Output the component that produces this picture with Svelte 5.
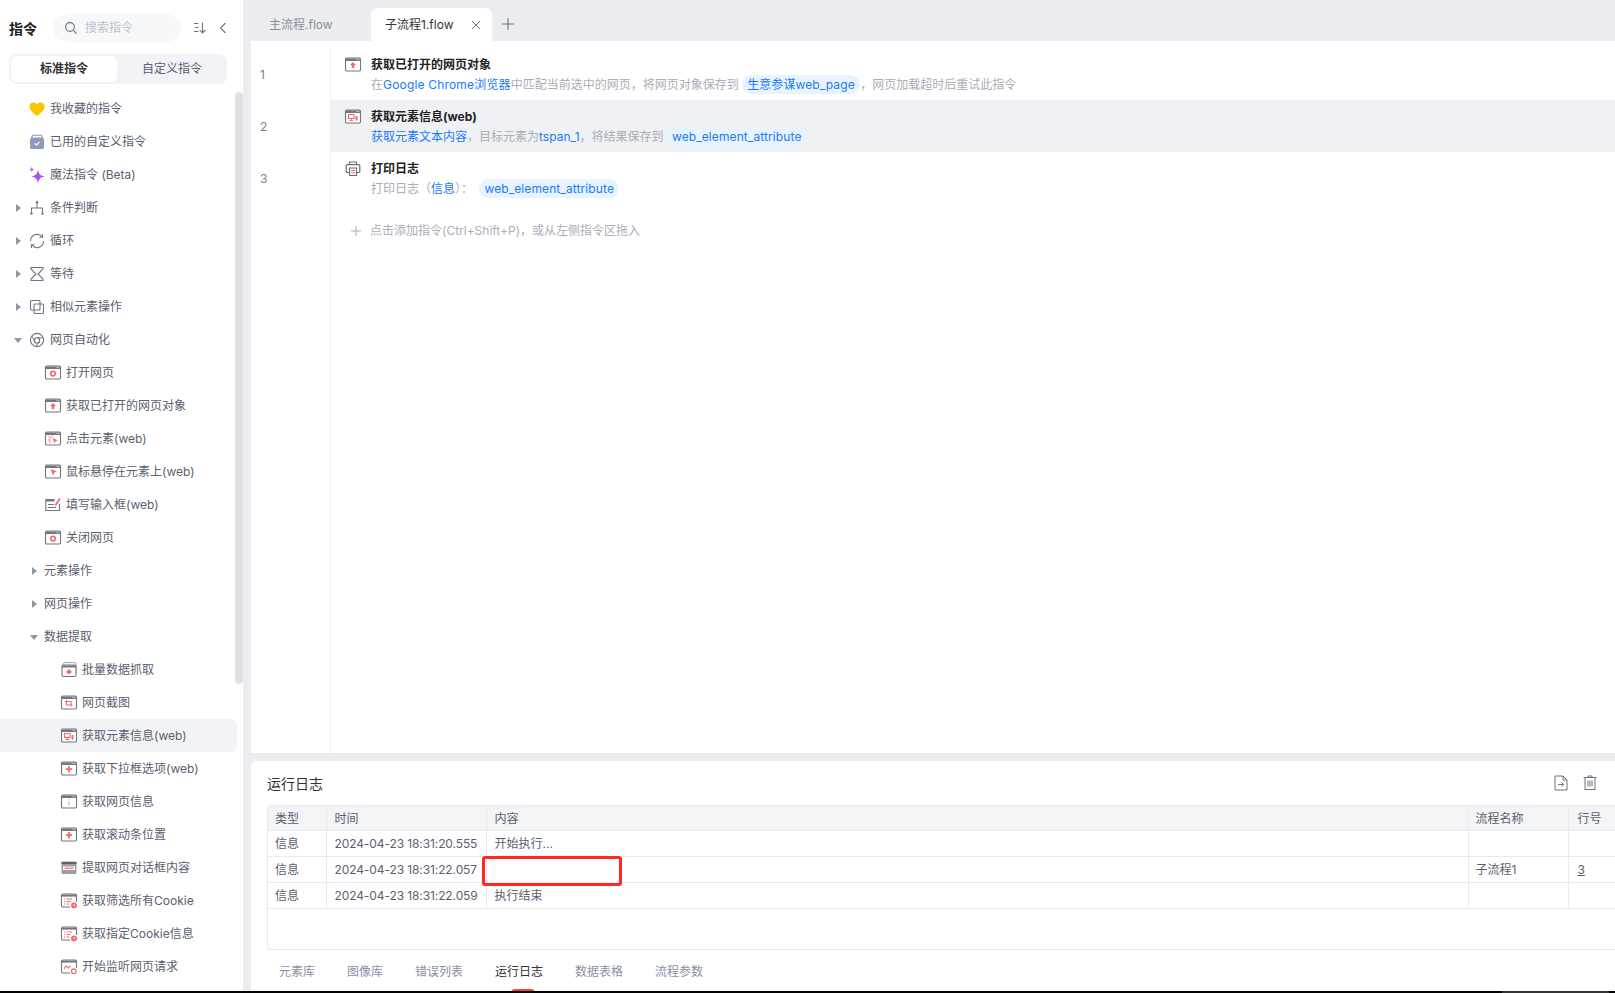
<script>
const tree = [
  { l: 0, t: '我收藏的指令', i: 'heart' },
  { l: 0, t: '已用的自定义指令', i: 'cal' },
  { l: 0, t: '魔法指令 (Beta)', i: 'spark' },
  { l: 0, t: '条件判断', i: 'branch', a: 'r' },
  { l: 0, t: '循环', i: 'loop', a: 'r' },
  { l: 0, t: '等待', i: 'hour', a: 'r' },
  { l: 0, t: '相似元素操作', i: 'copy', a: 'r' },
  { l: 0, t: '网页自动化', i: 'chrome', a: 'd' },
  { l: 1, t: '打开网页', i: 'ring' },
  { l: 1, t: '获取已打开的网页对象', i: 'up' },
  { l: 1, t: '点击元素(web)', i: 'click' },
  { l: 1, t: '鼠标悬停在元素上(web)', i: 'hover' },
  { l: 1, t: '填写输入框(web)', i: 'edit' },
  { l: 1, t: '关闭网页', i: 'ring' },
  { l: 'g', t: '元素操作', a: 'r' },
  { l: 'g', t: '网页操作', a: 'r' },
  { l: 'g', t: '数据提取', a: 'd' },
  { l: 2, t: '批量数据抓取', i: 'batch' },
  { l: 2, t: '网页截图', i: 'crop' },
  { l: 2, t: '获取元素信息(web)', i: 'info', on: true },
  { l: 2, t: '获取下拉框选项(web)', i: 'plus' },
  { l: 2, t: '获取网页信息', i: 'i' },
  { l: 2, t: '获取滚动条位置', i: 'plus' },
  { l: 2, t: '提取网页对话框内容', i: 'dialog' },
  { l: 2, t: '获取筛选所有Cookie', i: 'list' },
  { l: 2, t: '获取指定Cookie信息', i: 'list' },
  { l: 2, t: '开始监听网页请求', i: 'listen' }
];
const logs = [
  { time: '2024-04-23 18:31:20.555', text: '开始执行...', flow: '', line: '' },
  { time: '2024-04-23 18:31:22.057', text: '', flow: '子流程1', line: '3' },
  { time: '2024-04-23 18:31:22.059', text: '执行结束', flow: '', line: '' }
];
const bottomTabs = ['元素库', '图像库', '错误列表', '运行日志', '数据表格', '流程参数'];
</script>

{#snippet glyph(k)}
  {#if k === 'ring'}
    <circle cx="8" cy="8.6" r="2.3" fill="none" stroke="#f4686c" stroke-width="1.6" />
  {:else if k === 'up'}
    <path d="M8 5 L11 8 H9.3 V11 H6.7 V8 H5 Z" fill="#f4686c" />
  {:else if k === 'click'}
    <path d="M7.5 7 L13 9.2 L10.6 10 L9.6 12.4 Z" fill="#f4686c" /><path d="M3.5 5.5 L6 7.5 M3 9 H5.5 M4 12 L6 10 M7 4.5 V6.5" stroke="#f4686c" stroke-width="1" />
  {:else if k === 'hover'}
    <path d="M5.5 5 L12 7.6 L9.3 8.6 L8.2 11.5 Z" fill="#f4686c" />
  {:else if k === 'crop'}
    <path d="M5.5 5 V10 H11.5 M4 6.5 H10 V11.5" fill="none" stroke="#f4686c" stroke-width="1.1" />
  {:else if k === 'info'}
    <path d="M3.5 5.5 H9 V9.5 H3.5 Z M6.2 9.5 V11.5 M4.5 11.5 H8" fill="none" stroke="#f4686c" stroke-width="1.1" /><path d="M10.5 7 H12.5 V11.5 H10.5 Z" fill="#f4686c" />
  {:else if k === 'plus'}
    <path d="M8 5 V11.5 M4.8 8.2 H11.2" stroke="#f4686c" stroke-width="1.8" />
  {:else if k === 'i'}
    <path d="M8 5.2 V6.2 M8 7.4 V11.4" stroke="#f6a0a3" stroke-width="1.3" />
  {/if}
{/snippet}

{#snippet icon(k)}
  <svg class="ic" viewBox="0 0 16 16" aria-hidden="true">
    {#if k === 'heart'}
      <path d="M8 15 C2.6 11 .4 8.6 .4 5.6 C.4 3.2 2.2 1.6 4.3 1.6 C5.9 1.6 7.3 2.4 8 3.7 C8.7 2.4 10.1 1.6 11.7 1.6 C13.8 1.6 15.6 3.2 15.6 5.6 C15.6 8.6 13.4 11 8 15 Z" fill="#ffc400" />
    {:else if k === 'cal'}
      <path d="M3.5 1.2 H12.5 L13.5 4 H2.5 Z" fill="none" stroke="#8f9bb8" stroke-width="1.1" /><rect x="1" y="4" width="14" height="11" rx="1.6" fill="#8f9bb8" /><path d="M5.6 9.3 L7.4 11 L10.6 7.8" fill="none" stroke="#fff" stroke-width="1.1" />
    {:else if k === 'spark'}
      <path d="M9 2.5 C9.8 7 11 8.6 16 9.5 C11 10.4 9.8 12 9 16.5 C8.2 12 7 10.4 2 9.5 C7 8.6 8.2 7 9 2.5 Z" fill="#a855f7" /><path d="M2.8 -.4 C3.1 1.6 3.6 2.2 5.6 2.6 C3.6 3 3.1 3.6 2.8 5.6 C2.5 3.6 2 3 0 2.6 C2 2.2 2.5 1.6 2.8 -.4 Z" fill="#b565f5" />
    {:else if k === 'branch'}
      <path d="M8 3 V7.5 M2.5 13 V8 H13.5 V13" fill="none" stroke="#6e7484" stroke-width="1.1" /><circle cx="8" cy="2.2" r="1.2" fill="#6e7484" /><circle cx="2.5" cy="13.6" r="1.2" fill="#6e7484" /><circle cx="13.5" cy="13.6" r="1.2" fill="#6e7484" />
    {:else if k === 'loop'}
      <path d="M1.5 8 A6.5 6.5 0 0 1 13 3.8 M14.5 8 A6.5 6.5 0 0 1 3 12.2 M13.6 1 V4.3 H10.4 M2.4 15 V11.7 H5.6" fill="none" stroke="#6e7484" stroke-width="1.1" />
    {:else if k === 'hour'}
      <path d="M2 1.5 H14 V3 L9 8 L14 13 V14.5 H2 V13 L7 8 L2 3 Z" fill="none" stroke="#6e7484" stroke-width="1.1" />
    {:else if k === 'copy'}
      <rect x="1.5" y="1.5" width="9.5" height="9.5" rx="1" fill="none" stroke="#6e7484" stroke-width="1.1" /><rect x="5" y="5" width="9.5" height="9.5" rx="1" fill="none" stroke="#6e7484" stroke-width="1.1" />
    {:else if k === 'chrome'}
      <circle cx="8" cy="8" r="6.6" fill="none" stroke="#6e7484" stroke-width="1.1" /><circle cx="8" cy="8.4" r="2.6" fill="none" stroke="#6e7484" stroke-width="1.1" /><path d="M8 5.8 H14 M5.8 9.8 L3 4.2 M10.2 9.8 L7 14.4" fill="none" stroke="#6e7484" stroke-width="1" />
    {:else if k === 'batch'}
      <rect x="2.5" y=".6" width="12.5" height="11" rx="1.5" fill="none" stroke="#9a9ca6" stroke-width="1" /><rect x="1" y="3" width="14" height="11.5" rx="1.5" fill="#fff" stroke="#73757f" stroke-width="1.1" /><path d="M1 3.5 H15 V5.5 H1 Z" fill="#73757f" /><path d="M8 7 L11 10 L8 12.5 L5 10 Z" fill="#f4686c" />
    {:else if k === 'dialog'}
      <rect x=".5" y="1.5" width="15" height="12.5" rx="1.2" fill="#9b9da6" /><path d="M.5 2 H15.5 V4 H.5 Z" fill="#5f616b" /><rect x="2" y="6.5" width="12" height="3.5" fill="#fff" /><path d="M3.5 8.2 H12.5" stroke="#f4686c" stroke-width="1.2" />
    {:else if k === 'list' || k === 'listen'}
      <path d="M9 14 H2 A1.5 1.5 0 0 1 .5 12.5 V2.5 A1.5 1.5 0 0 1 2 1 H14 A1.5 1.5 0 0 1 15.5 2.5 V9" fill="none" stroke="#73757f" stroke-width="1.1" /><path d="M.5 1.6 H15.5 V3.6 H.5 Z" fill="#73757f" />
      {#if k === 'list'}
        <path d="M3 6 H4 M5.5 6 H11 M3 8.5 H4 M5.5 8.5 H9.5 M3 11 H4 M5.5 11 H8" stroke="#f4686c" stroke-width="1.1" /><circle cx="13" cy="12.4" r="2.9" fill="#f4686c" /><path d="M13 11 V12.8 H14" stroke="#fff" stroke-width=".8" fill="none" />
      {:else}
        <path d="M3 9.5 L5.5 7 L7.5 9 L9.5 7" fill="none" stroke="#f4686c" stroke-width="1.1" /><circle cx="12.8" cy="12.2" r="2.3" fill="none" stroke="#f4686c" stroke-width="1.2" />
      {/if}
    {:else if k === 'edit'}
      <path d="M14.5 7 V13.5 H.8 V2.5 H9.5" fill="none" stroke="#73757f" stroke-width="1.1" /><path d="M.8 2.5 H9.5 V4.5 H.8 Z" fill="#73757f" /><path d="M3 7.5 H9 M3 10.5 H11" stroke="#73757f" stroke-width="1" /><path d="M9.5 8 L14.2 1 L15.6 2.1 L11 8.9 Z" fill="#f4686c" />
    {:else if k === 'print'}
      <path d="M4.5 3.6 V1 H11.5 V3.6 M4 11.5 H2.5 A1.2 1.2 0 0 1 1.2 10.3 V4.9 A1.2 1.2 0 0 1 2.5 3.7 H13.5 A1.2 1.2 0 0 1 14.8 4.9 V10.3 A1.2 1.2 0 0 1 13.5 11.5 H12" fill="none" stroke="#6b6e78" stroke-width="1.2" /><rect x="4.5" y="7" width="7" height="7.5" fill="#fff" stroke="#6b6e78" stroke-width="1.1" /><path d="M6 9.5 H10 M6 11.8 H10" stroke="#f4686c" stroke-width="1" />
    {:else}
      <rect x=".5" y="1" width="15" height="13" rx="1.2" fill="#fff" stroke="#73757f" stroke-width="1.1" /><path d="M.5 1.5 H15.5 V4 H.5 Z" fill="#73757f" /><path d="M11.6 2.6 H12.5 M13.3 2.6 H14.2" stroke="#fff" stroke-width=".9" />
      {@render glyph(k)}
    {/if}
  </svg>
{/snippet}

<div class="page">
  <div class="shell">
    <aside class="side">
      <div class="sidehead">
        <strong class="sidetitle">指令</strong>
        <div class="search">
          <svg class="sic" viewBox="0 0 14 14" aria-hidden="true"><circle cx="6" cy="6" r="4.4" fill="none" stroke="#6d7280" stroke-width="1.1" /><path d="M9.3 9.3 L12.6 12.6" stroke="#6d7280" stroke-width="1.1" /></svg>
          <span>搜索指令</span>
        </div>
        <svg class="sort" viewBox="0 0 14 14" aria-hidden="true"><path d="M1 2.5 H5.5 M2 6.5 H5.5 M1 10.5 H5.5 M9.5 1.5 V12 M6.8 9 L9.5 12 L12.5 9" fill="none" stroke="#6d7280" stroke-width="1.1" /></svg>
        <svg class="back" viewBox="0 0 8 12" aria-hidden="true"><path d="M6.5 1 L1.5 6 L6.5 11" fill="none" stroke="#6d7280" stroke-width="1.1" /></svg>
      </div>
      <div class="seg">
        <div class="seg-on">标准指令</div>
        <div class="seg-off">自定义指令</div>
      </div>
      <div class="treewrap">
        <div class="tree">
          {#each tree as n}
            <div class="node l{n.l}" class:on={n.on}>
              {#if n.a}<span class="arrow {n.a}"></span>{/if}
              {#if n.i}{@render icon(n.i)}{/if}
              <span>{n.t}</span>
            </div>
          {/each}
        </div>
        <div class="thumb"></div>
      </div>
    </aside>

    <main class="main">
      <div class="tabs">
        <div class="tab">主流程.flow</div>
        <div class="tab active">
          子流程1.flow
          <svg class="close" viewBox="0 0 10 10" aria-hidden="true"><path d="M1 1 L9 9 M9 1 L1 9" stroke="#6d7280" stroke-width="1" /></svg>
        </div>
        <svg class="add" viewBox="0 0 12 12" aria-hidden="true"><path d="M6 0 V12 M0 6 H12" stroke="#6d7280" stroke-width="1.1" /></svg>
      </div>

      <section class="editor">
        <div class="row">
          <div class="num">1</div>
          <div class="body">
            <div class="rtitle">{@render icon('up')}<b>获取已打开的网页对象</b></div>
            <div class="desc">在<em>Google Chrome浏览器</em>中匹配当前选中的网页，将网页对象保存到 <span class="chip tight">生意参谋web_page</span> ，网页加载超时后重试此指令</div>
          </div>
        </div>
        <div class="row cur">
          <div class="num">2</div>
          <div class="body">
            <div class="rtitle">{@render icon('info')}<b>获取元素信息(web)</b></div>
            <div class="desc"><em class="plain">获取元素文本内容</em>，目标元素为<em class="plain">tspan_1</em>，将结果保存到 <span class="chip">web_element_attribute</span></div>
          </div>
        </div>
        <div class="row">
          <div class="num">3</div>
          <div class="body">
            <div class="rtitle">{@render icon('print')}<b>打印日志</b></div>
            <div class="desc">打印日志（<em class="plain">信息</em>）： <span class="chip shifted">web_element_attribute</span></div>
          </div>
        </div>
        <div class="row fill">
          <div class="num"></div>
          <div class="addline">
            <svg viewBox="0 0 10 10" aria-hidden="true"><path d="M5 0 V10 M0 5 H10" stroke="#a9adb8" stroke-width="1" /></svg>
            <span>点击添加指令(Ctrl+Shift+P)，或从左侧指令区拖入</span>
          </div>
        </div>
      </section>

      <section class="log">
        <div class="loghead">
          <h2>运行日志</h2>
          <svg class="lic" viewBox="0 0 14 16" aria-hidden="true"><path d="M1 1 H9 L13 5 V15 H1 Z M9 1 V5 H13 M4 9.5 H9.5 M7.5 7.5 L9.7 9.5 L7.5 11.5" fill="none" stroke="#6d7280" stroke-width="1" /></svg>
          <svg class="lic" viewBox="0 0 14 16" aria-hidden="true"><path d="M.5 2.5 H13.5 M5 2.5 V1 H9 V2.5 M2 2.5 V14.5 H12 V2.5 M5 5.5 V11.5 M7 5.5 V11.5 M9 5.5 V11.5" fill="none" stroke="#6d7280" stroke-width="1" /></svg>
        </div>
        <div class="tablewrap">
          <table>
            <colgroup><col class="c1" /><col class="c2" /><col class="c3" /><col class="c4" /><col class="c5" /></colgroup>
            <thead><tr><th>类型</th><th>时间</th><th>内容</th><th>流程名称</th><th>行号</th></tr></thead>
            <tbody>
              {#each logs as r}
                <tr><td>信息</td><td class="tm">{r.time}</td><td>{r.text}</td><td>{r.flow}</td><td><u>{r.line}</u></td></tr>
              {/each}
            </tbody>
          </table>
          <div class="redbox"></div>
        </div>
        <nav class="btabs">
          {#each bottomTabs as t}
            <span class:act={t === '运行日志'}>{t}</span>
          {/each}
        </nav>
      </section>
    </main>
  </div>
  <div class="strip"><span></span></div>
</div>

<style>
:global(body) { margin: 0; }
.page {
  width: 1615px; height: 993px; display: flex; flex-direction: column; overflow: hidden;
  font: 12px/18px Inter, "Noto Sans CJK SC", sans-serif; color: #5a6070; background: #ebedf1;
}
.shell { flex: 1; min-height: 0; display: flex; gap: 8px; }
.strip { height: 2px; background: #000; display: flex; justify-content: flex-end; padding-right: 6px; }
.strip span { width: 107px; background: #333; }
.ic { width: 16px; height: 16px; flex: none; overflow: visible; }

.side { width: 243px; flex: none; background: #fff; display: flex; flex-direction: column; overflow: hidden; }
.sidehead { height: 28px; margin-top: 14px; padding-left: 9px; display: flex; align-items: center; }
.sidetitle { width: 44px; font-size: 14px; color: #222; padding-top: 1px; }
.search { width: 128px; height: 28px; box-sizing: border-box; padding-left: 11px; border-radius: 14px; background: #f7f8fa; display: flex; align-items: center; gap: 7px; color: #bcc2d0; }
.sic { width: 14px; height: 14px; }
.sort { width: 14px; height: 14px; margin-left: 12px; }
.back { width: 8px; height: 12px; margin-left: 12px; }
.seg { width: 218px; height: 30px; box-sizing: border-box; margin: 12px 0 0 9px; padding: 2px; border-radius: 8px; background: #f2f3f7; display: flex; align-items: center; text-align: center; }
.seg-on { width: 106px; height: 26px; line-height: 26px; background: #fff; border-radius: 6px; font-weight: 700; color: #333; }
.seg-off { flex: 1; color: #5a6070; padding-left: 2px; }
.treewrap { flex: 1; display: flex; min-height: 0; margin-top: 8px; position: relative; }
.tree { width: 237px; flex: none; }
.node { height: 33px; display: flex; align-items: center; gap: 5px; position: relative; white-space: nowrap; }
.node.l0 { padding-left: 29px; }
.node.l1 { padding-left: 45px; }
.node.lg { padding-left: 44px; }
.node.l2 { padding-left: 61px; }
.node.on { background: #f2f3f6; border-radius: 0 6px 6px 0; }
.arrow { position: absolute; width: 0; height: 0; }
.arrow.r { left: 16px; top: 13px; border-left: 5px solid #8d95ab; border-top: 4px solid transparent; border-bottom: 4px solid transparent; }
.arrow.d { left: 14px; top: 15px; border-top: 5px solid #8d95ab; border-left: 4px solid transparent; border-right: 4px solid transparent; }
.lg .arrow.r { left: 32px; }
.lg .arrow.d { left: 30px; }
.thumb { position: absolute; left: 235px; top: 0; width: 8px; height: 592px; border-radius: 4px; background: #dfe1e6; }

.main { flex: 1; min-width: 0; display: flex; flex-direction: column; }
.tabs { height: 41px; flex: none; display: flex; align-items: flex-end; }
.tab { height: 33px; line-height: 33px; color: #8a8f9c; width: 120px; box-sizing: border-box; padding-left: 18px; }
.tab.active { width: 121px; padding-left: 14px; background: #fff; color: #333; border-radius: 6px 6px 0 0; display: flex; align-items: center; }
.close { width: 10px; height: 10px; margin-left: 17px; }
.add { width: 12px; height: 12px; margin: 0 0 11px 10px; }

.editor { height: 712px; flex: none; background: #fff; padding-top: 7px; box-sizing: border-box; display: flex; flex-direction: column; }
.row { height: 52px; flex: none; display: flex; }
.row.fill { flex: 1; }
.num { width: 80px; flex: none; box-sizing: border-box; border-right: 1px solid #eceef2; padding: 18px 0 0 9px; color: #7d8290; background: #fff; }
.body { flex: 1; padding: 8px 0 0 14px; }
.cur .body { background: #f0f1f5; }
.rtitle { display: flex; align-items: center; gap: 10px; height: 18px; }
.rtitle b { color: #222; font-weight: 700; }
.desc { margin: 1px 0 0 26px; color: #a9adb8; height: 20px; line-height: 20px; white-space: nowrap; }
.desc em { font-style: normal; color: #1a7af8; letter-spacing: .18px; }
.desc em.plain { letter-spacing: 0; }
.chip { display: inline-block; height: 19px; line-height: 19px; padding: 0 5px; border-radius: 10px; background: #e9f3ff; color: #1a7af8; letter-spacing: .1px; }
.chip.tight { margin-right: -3px; }
.chip.shifted { margin-left: 3px; }
.addline { padding: 18px 0 0 20px; display: flex; align-items: flex-start; gap: 9px; color: #a9adb8; }
.addline svg { width: 10px; height: 10px; margin-top: 4px; }

.log { flex: 1; min-height: 0; margin-top: 8px; background: #fff; border-radius: 6px 0 0 0; padding-left: 16px; display: flex; flex-direction: column; overflow: hidden; }
.loghead { height: 44px; flex: none; display: flex; align-items: center; gap: 15px; padding-right: 18px; }
.loghead h2 { margin: 0 auto 0 0; padding-top: 1px; font-size: 14px; font-weight: 400; color: #333; }
.lic { width: 14px; height: 16px; }
.tablewrap { height: 145px; flex: none; position: relative; width: 1400px; border: 1px solid #e8eaef; border-radius: 4px 0 0 4px; border-right: 0; box-sizing: border-box; }
table { border-collapse: collapse; table-layout: fixed; width: 1379px; }
.c1 { width: 58px; } .c2 { width: 160px; } .c3 { width: 982px; } .c4 { width: 100px; } .c5 { width: 79px; }
th { height: 24px; padding: 2px 8px 0; background: #f3f4f6; font-weight: 400; text-align: left; border-right: 1px solid #e8eaef; border-bottom: 1px solid #e8eaef; box-sizing: border-box; color: #5a6070; }
td { height: 26px; padding: 1px 8px 0; border-right: 1px solid #e8eaef; border-bottom: 1px solid #e8eaef; box-sizing: border-box; color: #5a6070; white-space: nowrap; }
th:first-child, td:first-child, th:nth-child(4), td:nth-child(4) { padding-left: 7px; }
th:last-child, td:last-child { padding-left: 9px; }
td.tm { letter-spacing: -.1px; }
.redbox { position: absolute; left: 214px; top: 50px; width: 140px; height: 30px; box-sizing: border-box; border: 3px solid #ff2a1f; border-radius: 3px; }
.btabs { flex: 1; display: flex; gap: 32px; padding: 12px 0 0 12px; color: #8a90a5; }
.btabs span { position: relative; height: 20px; line-height: 20px; }
.btabs .act { color: #333; }
.btabs .act::after { content: ""; position: absolute; left: 16px; top: 27px; width: 24px; height: 4px; border-radius: 4px 4px 0 0; background: #f0453a; }
</style>
